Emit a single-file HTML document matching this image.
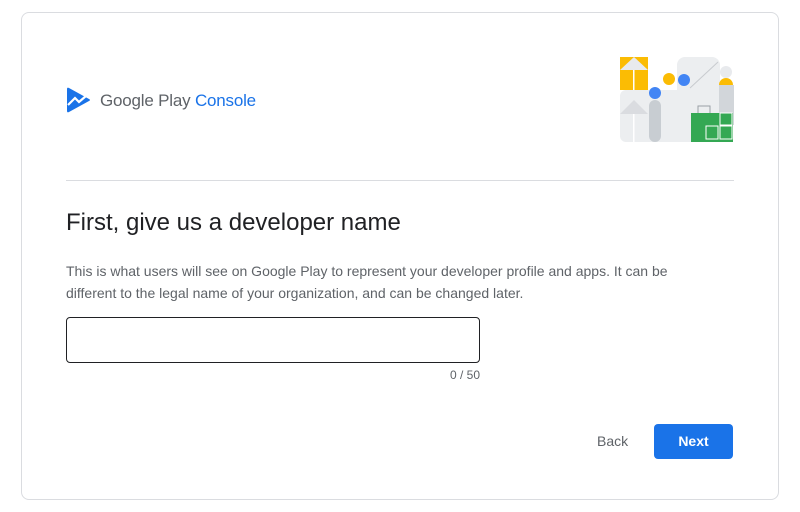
<!DOCTYPE html>
<html><head><style>
body{margin:0;background:#fff;font-family:"Liberation Sans",Arial,sans-serif;width:800px;height:512px;position:relative;overflow:hidden}
.card{position:absolute;left:21px;top:12px;width:756px;height:486px;border:1px solid #dadce0;border-radius:8px}
.abs{position:absolute}
</style></head><body>
<div class="card"></div>
<svg class="abs" style="left:66px;top:86px" width="26" height="28" viewBox="0 0 26 28">
<path d="M3 2 L23 13 Q25 14 23 15 L3 26 Q1 27 1 25 L1 3 Q1 1 3 2Z" fill="#1a73e8"/>
<path d="M2 19 L9 12 L13 16 L20 10" stroke="#fff" stroke-width="2.2" fill="none"/>
</svg>
<div class="abs" style="left:100px;top:91px;font-size:17px;color:#5f6368;white-space:nowrap;letter-spacing:-0.2px">Google Play <span style="color:#1a73e8">Console</span></div>
<svg class="abs" style="left:610px;top:50px" width="130" height="100" viewBox="0 0 130 100">
<rect x="10" y="40" width="110" height="52" rx="6" fill="#eceef0"/>
<rect x="67" y="7" width="43" height="45" rx="8" fill="#eceef0"/>
<line x1="80" y1="38" x2="108" y2="12" stroke="#c8cbcf" stroke-width="1"/>
<rect x="10" y="7" width="28" height="33" fill="#fbbc04"/>
<path d="M10 20 L24 7 L38 20Z" fill="#e8eaed"/>
<rect x="23" y="20" width="1.5" height="20" fill="#fff"/>
<path d="M10 64 L24 50 L38 64Z" fill="#dadce0"/>
<rect x="23" y="64" width="1.5" height="28" fill="#fff"/>
<rect x="39" y="50" width="12" height="42" rx="6" fill="#c8cdd2"/>
<circle cx="45" cy="43" r="6" fill="#4285f4"/>
<circle cx="59" cy="29" r="6" fill="#fbbc04"/>
<circle cx="74" cy="30" r="6" fill="#4285f4"/>
<circle cx="116" cy="22" r="6" fill="#e8eaed"/>
<path d="M109 35 a7 7 0 0 1 14 0Z" fill="#fbbc04"/>
<rect x="109" y="35" width="15" height="40" fill="#d2d6da"/>
<rect x="88" y="56" width="12" height="8" fill="none" stroke="#9aa0a6" stroke-width="1"/>
<rect x="81" y="63" width="42" height="29" fill="#34a853"/>
<rect x="96" y="76" width="12" height="13" fill="#34a853" stroke="#fff" stroke-width="1"/>
<rect x="110" y="76" width="12" height="13" fill="#34a853" stroke="#fff" stroke-width="1"/>
<rect x="110" y="63" width="12" height="12" fill="#34a853" stroke="#fff" stroke-width="1"/>
</svg>
<div class="abs" style="left:66px;top:180px;width:668px;height:1px;background:#dadce0"></div>
<div class="abs" style="left:66px;top:209px;font-size:24px;color:#202124">First, give us a developer name</div>
<div class="abs" style="left:66px;top:260px;width:650px;font-size:14px;line-height:22px;color:#5f6368">This is what users will see on Google Play to represent your developer profile and apps. It can be different to the legal name of your organization, and can be changed later.</div>
<div class="abs" style="left:66px;top:317px;width:412px;height:44px;border:1px solid #202124;border-radius:4px"></div>
<div class="abs" style="left:380px;top:368px;width:100px;text-align:right;font-size:12px;color:#5f6368">0 / 50</div>
<div class="abs" style="left:597px;top:433px;font-size:14px;color:#5f6368">Back</div>
<div class="abs" style="left:654px;top:424px;width:79px;height:35px;background:#1a73e8;border-radius:4px;color:#fff;font-size:14px;font-weight:bold;text-align:center;line-height:35px">Next</div>
</body></html>
